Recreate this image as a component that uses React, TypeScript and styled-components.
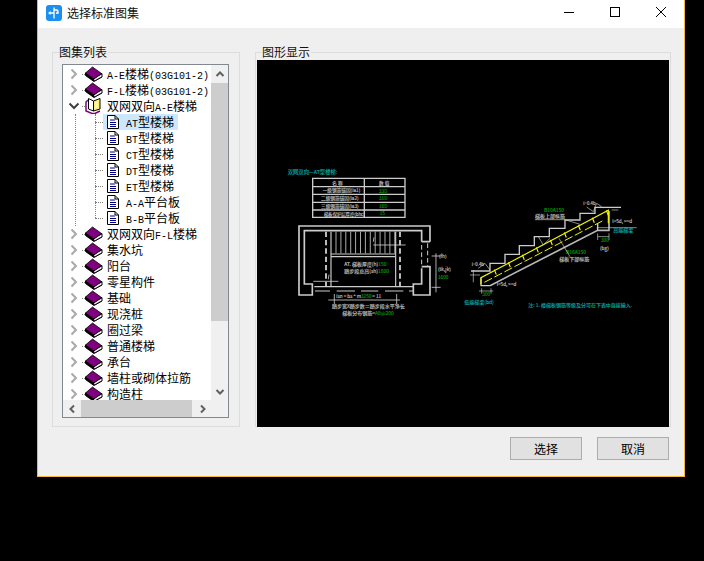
import styled, { createGlobalStyle } from 'styled-components'

const GlobalStyle = createGlobalStyle`
  html, body {
    margin: 0;
    height: 100%;
    background: #000;
  }
  body {
    font-family: "Noto Sans CJK SC", "Liberation Sans", sans-serif;
    font-size: 12px;
    color: #000;
  }
`

const cjk = '"Noto Sans CJK SC", "Liberation Sans", sans-serif'

const DialogWindow = styled.div`
  box-sizing: border-box;
  width: 648px;
  height: 477px;
  margin-left: 37px;
  border: 1px solid #f0b92e;
  border-top: 0;
  background: #efefef;
  display: flex;
  flex-direction: column;
`

const TitleBar = styled.div`
  height: 28px;
  flex: none;
  background: #fff;
  display: flex;
  align-items: center;
  padding-left: 8px;
`

const TitleText = styled.div`
  margin-left: 5px;
  font-size: 12px;
  line-height: 16px;
  flex: 1;
  margin-top: -3px;
  color: #111;
`

const TitleControl = styled.div`
  width: 46px;
  height: 24px;
  display: flex;
  align-items: center;
  justify-content: center;
  margin-top: -4px;
`

const Body = styled.div`
  flex: 1;
  display: flex;
  flex-direction: column;
  padding: 24px 13px 0 14px;
`

const Groups = styled.div`
  display: flex;
  gap: 15px;
  height: 375px;
  flex: none;
`

const Group = styled.div<{ $width: number }>`
  position: relative;
  box-sizing: border-box;
  width: ${(p) => p.$width}px;
  height: 100%;
  border: 1px solid #dcdcdc;
`

const GroupLabel = styled.div`
  position: absolute;
  top: -8px;
  left: 6px;
  line-height: 14px;
  padding-right: 1px;
  background: #efefef;
  color: #111;
`

const ListGroupBody = styled.div`
  box-sizing: border-box;
  height: 100%;
  padding: 11px 10px 8px 9px;
`

const TreeFrame = styled.div`
  box-sizing: border-box;
  height: 100%;
  border: 1px solid #828790;
  background: #fff;
  display: grid;
  grid-template-columns: 1fr 17px;
  grid-template-rows: 1fr 17px;
`

const TreeViewport = styled.div`
  overflow: hidden;
  padding-top: 1px;
`

const VerticalBar = styled.div`
  background: #f0f0f0;
  display: flex;
  flex-direction: column;
`

const HorizontalBar = styled.div`
  background: #f0f0f0;
  display: flex;
`

const BarCorner = styled.div`
  background: #f0f0f0;
`

const ArrowCell = styled.div`
  flex: none;
  width: 17px;
  height: 17px;
  display: flex;
  align-items: center;
  justify-content: center;
`

const VerticalTrack = styled.div`
  flex: 1;
  padding-top: 1px;
`

const VerticalThumb = styled.div`
  height: 238px;
  background: #cdcdcd;
`

const HorizontalTrack = styled.div`
  flex: 1;
  padding-left: 1px;
`

const HorizontalThumb = styled.div`
  width: 111px;
  height: 100%;
  background: #cdcdcd;
`

const Row = styled.div`
  height: 16px;
  display: flex;
  align-items: center;
  padding-left: 3px;
  white-space: nowrap;
`

const Expander = styled.div`
  width: 16px;
  height: 16px;
  flex: none;
  display: flex;
  align-items: center;
  justify-content: center;
`

const Connector = styled.div<{ $width: number }>`
  width: ${(p) => p.$width}px;
  flex: none;
  border-top: 1px dotted #808080;
`

const RowLabel = styled.span`
  margin-left: 4px;
  line-height: 16px;
  display: block;
  height: 16px;
`

const Latin = styled.span`
  font-family: "Liberation Mono", monospace;
  font-size: 10px;
`

const ChildList = styled.div`
  position: relative;
  margin-left: 12px;
  border-left: 1px dotted #808080;
  padding-left: 19px;

  &::before {
    content: '';
    position: absolute;
    left: 19px;
    top: 0;
    bottom: 8px;
    border-left: 1px dotted #808080;
  }
`

const ChildRow = styled.div`
  height: 16px;
  display: flex;
  align-items: center;
  white-space: nowrap;
`

const ChildLabel = styled.div<{ $selected?: boolean }>`
  height: 16px;
  display: flex;
  align-items: center;
  gap: 7px;
  padding: 0 4px;
  background: ${(p) => (p.$selected ? '#cce8ff' : 'transparent')};
`

const ChildText = styled.span`
  display: block;
  height: 16px;
  line-height: 15px;
`

const PreviewScreen = styled.div`
  margin: 7px 1px 0 1px;
  height: 367px;
  background: #000;
`

const Footer = styled.div`
  display: flex;
  justify-content: flex-end;
  gap: 15px;
  padding: 10px 2px 0 0;
`

const PushButton = styled.button`
  box-sizing: border-box;
  width: 72px;
  height: 23px;
  padding: 0;
  border: 1px solid #adadad;
  background: #e1e1e1;
  font-family: ${cjk};
  font-size: 12px;
  color: #000;
`

const DrawingSvg = styled.svg`
  display: block;
  width: 412px;
  height: 367px;
`

const Line = styled.path<{ $color?: string; $w?: number }>`
  fill: none;
  stroke: ${(p) => p.$color ?? '#cccccc'};
  stroke-width: ${(p) => p.$w ?? 3.5};
`

const Note = styled.text<{ $color?: string; $size?: number }>`
  fill: ${(p) => p.$color ?? '#c4c4c4'};
  stroke: ${(p) => p.$color ?? '#c4c4c4'};
  stroke-width: 0.4;
  font-family: ${cjk};
  font-size: ${(p) => p.$size ?? 15}px;
`

const Green = styled.tspan`
  fill: #0a9a0a;
  stroke: #0a9a0a;
`

function Mixed({ text }: { text: string }) {
  return (
    <>
      {text.split(/([\x00-\x7f]+)/).map((part, i) =>
        /^[\x00-\x7f]+$/.test(part) ? <Latin key={i}>{part}</Latin> : part,
      )}
    </>
  )
}

function Chevron({ open }: { open?: boolean }) {
  return (
    <svg width="12" height="12" viewBox="0 0 12 12">
      {open ? (
        <path d="M1.5 3.5 6 8l4.5-4.5" fill="none" stroke="#404040" strokeWidth="2" />
      ) : (
        <path d="M3.5 1.5 8 6l-4.5 4.5" fill="none" stroke="#a8a8a8" strokeWidth="2" />
      )}
    </svg>
  )
}

function ScrollArrow({ dir }: { dir: 'up' | 'down' | 'left' | 'right' }) {
  const d = {
    up: 'M1.5 7 5 3.5 8.500 7',
    down: 'M1.5 3 5 6.500 8.500 3',
    left: 'M7 1.5 3.500 5 7 8.500',
    right: 'M3 1.5 6.500 5 3 8.500',
  }[dir]
  return (
    <svg width="10" height="10" viewBox="0 0 10 10">
      <path d={d} fill="none" stroke="#606060" strokeWidth="2" />
    </svg>
  )
}

function BookIcon() {
  return (
    <svg width="18" height="16" viewBox="0 0 18 16" style={{ flex: 'none' }}>
      <path d="M.5 7v2.500L9 15.500l8-4.500V7.500z" fill="#000" stroke="#000" />
      <path d="M9 13 16.500 8.500V10.500L9.500 14.500z" fill="#fff" />
      <path d="M7.500 1 16.500 7.500 9 13 .5 7z" fill="#800080" stroke="#000" strokeWidth=".8" />
    </svg>
  )
}

function OpenBookIcon() {
  return (
    <svg width="18" height="16" viewBox="0 0 18 16" style={{ flex: 'none' }}>
      <path d="M3 2 1 4v9l6 2.500h3l5-2.500" fill="none" stroke="#800080" strokeWidth="1.500" />
      <path d="M3.500.5 8.500 3v10L3.500 11z" fill="#fff" stroke="#000" />
      <path d="M8.500 3 15 .5V11l-6.500 2z" fill="#ffef70" stroke="#000" />
      <path d="M10 5.500l3-1.200M10 7.500l3-1.200M10 9.500l3-1.200" stroke="#fff" />
    </svg>
  )
}

function DocIcon() {
  return (
    <svg width="12" height="14" viewBox="0 0 12 14" style={{ flex: 'none' }}>
      <path d="M.5.5h7.500l3.500 3.500v9.500H.5z" fill="#fff" stroke="#000" />
      <path d="M8 .5V4h3.500" fill="none" stroke="#000" />
      <path d="M3 5h5M3 7.500h6M3 9.500h6M3 11.500h6" stroke="#000080" />
    </svg>
  )
}

function AppLogo() {
  return (
    <svg width="16" height="16" viewBox="0 0 16 16" style={{ flex: 'none', marginTop: '-3px' }}>
      <rect width="16" height="16" rx="3" fill="#1a8ff0" />
      <path d="M8 2.500v11M3 8h5M8 5h2.500a1.500 1.500 0 0 1 1.500 1.500V8H10" fill="none" stroke="#fff" strokeWidth="1.300" />
      <path d="M2 8l2.500-2v4z" fill="#fff" />
    </svg>
  )
}

function PlanDrawing() {
  const treads = Array.from({ length: 13 }, (_, i) => 183 + i * 14.7)
  return (
    <g transform="translate(275 160) scale(0.3333)">
      <Note x="38" y="41" $color="#08a8a8" $size={16}>双网双向—AT型楼梯:</Note>
      <Line d="M113 55H390V172H113zM113 80H390M113 103H390M113 127H390M113 150H390M268 55V172" $w={4} />
      <Note x="172" y="75" $size={14}>名 称</Note>
      <Note x="312" y="75" $size={14}>数 值</Note>
      <Note x="143" y="97" $size={14}>一级钢筋锚固(la1)</Note>
      <Note x="138" y="121" $size={14}>二级钢筋锚固(la2)</Note>
      <Note x="138" y="145" $size={14}>三级钢筋锚固(la3)</Note>
      <Note x="147" y="167" $size={13}>梯板保护层厚度(bhc)</Note>
      <Note x="312" y="98" $color="#0a9a0a" $size={14}>33D</Note>
      <Note x="312" y="121" $color="#0a9a0a" $size={14}>31D</Note>
      <Note x="312" y="145" $color="#0a9a0a" $size={14}>16D</Note>
      <Note x="314" y="166" $color="#0a9a0a" $size={14}>15</Note>

      <Line d="M465 245V198H72V405H112V378" $w={5} />
      <Line d="M440 245V212H88V372H112V378" $w={5} />
      <Line d="M440 245H465M440 325V372H415V405H465V320H440" $w={5} />
      <Line d="M118 380H415" />
      <Line d="M440 255V320M458 250V320" $color="#d0d0d0" $w={3} strokeDasharray="14 8" />
      <Line d="M153 215V378M375 215V378" $color="#e0e0e0" $w={5} strokeDasharray="16 9" />
      <Line d={treads.map((x) => `M${x} 215V280`).join('')} $w={2.500} />
      <Line d="M168 215V378M362 215V378M168 282H360M168 290H360" />
      <Line d="M295 255H392M297 232 295 245M115 364H190M162 344 160 358" $w={2.500} />
      <Note x="208" y="318">AT. 梯板厚度(h)<Green>150</Green></Note>
      <Note x="208" y="338">踏步段总高(sh)<Green>1800</Green></Note>
      <Line d="M483 280V397M470 288H497M470 382H497" $w={2.500} />
      <Note x="492" y="293" $size={14}>(fh)</Note>
      <Note x="489" y="332" $size={14}>(tk,jk)</Note>
      <Note x="489" y="356" $color="#0a9a0a" $size={14}>1600</Note>
      <Line d="M120 393H165M185 393H240M258 393H310M330 393H385M402 393H415" $w={3} />
      <Line d="M160 420H375M178 402V432M365 402V432" $w={2.500} />
      <Note x="184" y="415" $size={14}>lsn = bs * m<Green>3250</Green> = 11</Note>
      <Note x="171" y="443">踏步宽X踏步数＝踏步段水平净长</Note>
      <Note x="202" y="465">梯板分布钢筋=<Green>A8@200</Green></Note>
    </g>
  )
}

function SectionDrawing() {
  const stirrups = Array.from({ length: 9 }, (_, i) => 118 + i * 42)
  return (
    <g transform="translate(455 195) scale(0.3333)">
      <Line
        d="M48 228H105V205H150V178H193V152H238V125H283V100H330V75H375V55H420V37H498"
        $w={4}
      />
      <Line d="M105 272 428 106H462V48" $color="#b8b8b8" $w={5} />
      <Line d="M78 248V272H105M428 106V85" $w={4} />
      <Line d="M78 268V248L460 46V85" $color="#f5f500" $w={3.5} />
      <Line d="M88 262 442 78" $color="#f5f500" $w={3} strokeDasharray="26 8" />
      <Line
        d={stirrups
          .map((x) => {
            const y = 248 - 0.529 * (x - 78)
            return `M${x} ${y - 3}L${x + 6} ${y + 12}`
          })
          .join('')}
        $color="#f5f500"
        $w={3.5}
      />
      <Note x="267" y="50" $color="#0a9a0a">B10A150</Note>
      <Note x="240" y="69">梯板上部纵筋</Note>
      <Line d="M240 74H330L375 88" $w={2} />
      <Note x="333" y="178" $color="#0a9a0a">B16A150</Note>
      <Note x="313" y="197">梯板下部纵筋</Note>
      <Line d="M312 130 345 185" $w={2} />
      <Note x="385" y="31" $size={13}>l=0.4b</Note>
      <Note x="50" y="214" $size={13}>l=0.4b</Note>
      <Line d="M395 36 415 50 425 25 440 35M70 220 90 205 105 225M250 125 265 150 285 130" $w={2} />
      <Line d="M45 240H75M55 225V262M470 45H490" $w={2} />
      <Note x="472" y="84" $size={14}>l=5d, &gt;=d</Note>
      <Note x="125" y="274" $size={14}>l=5d, &gt;=d</Note>
      <Note x="475" y="112" $color="#08a8a8">高端梯梁</Note>
      <Note x="435" y="164" $size={14}>(bg)</Note>
      <Line d="M425 98H545M428 125H462M428 115V135M462 115V135" $w={2} />
      <Note x="438" y="141" $color="#0a9a0a" $size={14}>300</Note>
      <Line d="M72 288H115M80 280V296M108 280V296" $w={2} />
      <Note x="82" y="303" $color="#0a9a0a" $size={14}>300</Note>
      <Note x="28" y="326" $color="#08a8a8">低端梯梁(bd)</Note>
      <Note x="220" y="335" $color="#08a8a8">注: 1. 楼梯板钢筋等级及分可在下表中直接输入.</Note>
    </g>
  )
}

const topRows = ['A-E楼梯(03G101-2)', 'F-L楼梯(03G101-2)']
const openRow = '双网双向A-E楼梯'
const childRows = ['AT型楼梯', 'BT型楼梯', 'CT型楼梯', 'DT型楼梯', 'ET型楼梯', 'A-A平台板', 'B-B平台板']
const bottomRows = [
  '双网双向F-L楼梯',
  '集水坑',
  '阳台',
  '零星构件',
  '基础',
  '现浇桩',
  '圈过梁',
  '普通楼梯',
  '承台',
  '墙柱或砌体拉筋',
  '构造柱',
]

function ClosedRow({ label }: { label: string }) {
  return (
    <Row>
      <Expander>
        <Chevron />
      </Expander>
      <Connector $width={3} />
      <BookIcon />
      <RowLabel>
        <Mixed text={label} />
      </RowLabel>
    </Row>
  )
}

export default function App() {
  return (
    <DialogWindow>
      <GlobalStyle />
      <TitleBar>
        <AppLogo />
        <TitleText>选择标准图集</TitleText>
        <TitleControl>
          <svg width="10" height="10" viewBox="0 0 10 10">
            <path d="M0 5.500h10" stroke="#000" />
          </svg>
        </TitleControl>
        <TitleControl>
          <svg width="10" height="10" viewBox="0 0 10 10">
            <rect x=".5" y=".5" width="9" height="9" fill="none" stroke="#000" />
          </svg>
        </TitleControl>
        <TitleControl>
          <svg width="10" height="10" viewBox="0 0 10 10">
            <path d="M0 0l10 10M10 0 0 10" stroke="#000" />
          </svg>
        </TitleControl>
      </TitleBar>
      <Body>
        <Groups>
          <Group $width={188}>
            <GroupLabel>图集列表</GroupLabel>
            <ListGroupBody>
              <TreeFrame>
                <TreeViewport>
                  {topRows.map((label) => (
                    <ClosedRow key={label} label={label} />
                  ))}
                  <Row>
                    <Expander>
                      <Chevron open />
                    </Expander>
                    <Connector $width={3} />
                    <OpenBookIcon />
                    <RowLabel>
                      <Mixed text={openRow} />
                    </RowLabel>
                  </Row>
                  <ChildList>
                    {childRows.map((label, i) => (
                      <ChildRow key={label}>
                        <Connector $width={8} />
                        <ChildLabel $selected={i === 0}>
                          <DocIcon />
                          <ChildText>
                            <Mixed text={label} />
                          </ChildText>
                        </ChildLabel>
                      </ChildRow>
                    ))}
                  </ChildList>
                  {bottomRows.map((label) => (
                    <ClosedRow key={label} label={label} />
                  ))}
                </TreeViewport>
                <VerticalBar>
                  <ArrowCell>
                    <ScrollArrow dir="up" />
                  </ArrowCell>
                  <VerticalTrack>
                    <VerticalThumb />
                  </VerticalTrack>
                  <ArrowCell>
                    <ScrollArrow dir="down" />
                  </ArrowCell>
                </VerticalBar>
                <HorizontalBar>
                  <ArrowCell>
                    <ScrollArrow dir="left" />
                  </ArrowCell>
                  <HorizontalTrack>
                    <HorizontalThumb />
                  </HorizontalTrack>
                  <ArrowCell>
                    <ScrollArrow dir="right" />
                  </ArrowCell>
                </HorizontalBar>
                <BarCorner />
              </TreeFrame>
            </ListGroupBody>
          </Group>
          <Group $width={416}>
            <GroupLabel>图形显示</GroupLabel>
            <PreviewScreen>
              <DrawingSvg viewBox="257 60 412 367">
                <PlanDrawing />
                <SectionDrawing />
              </DrawingSvg>
            </PreviewScreen>
          </Group>
        </Groups>
        <Footer>
          <PushButton>选择</PushButton>
          <PushButton>取消</PushButton>
        </Footer>
      </Body>
    </DialogWindow>
  )
}
